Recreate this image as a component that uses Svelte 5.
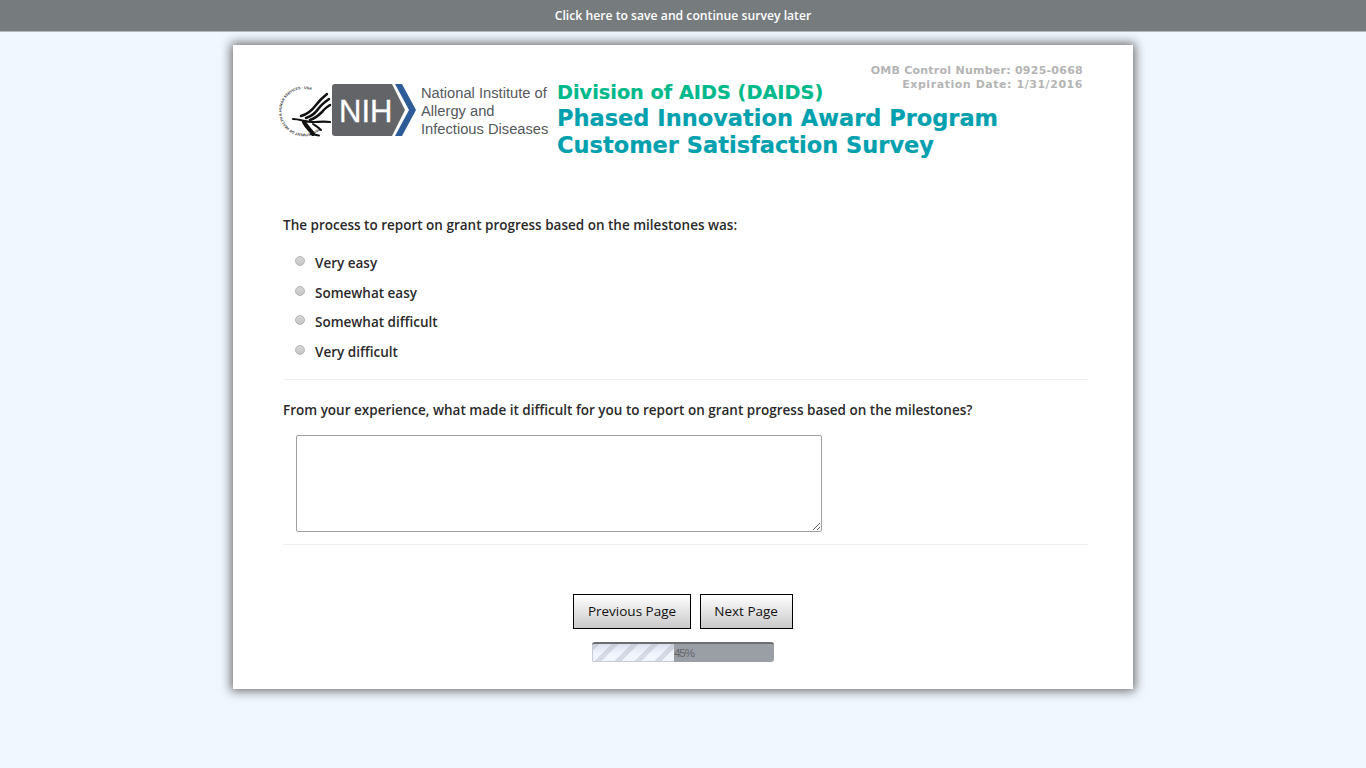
<script>
  const options = ['Very easy', 'Somewhat easy', 'Somewhat difficult', 'Very difficult'];
  const progress = 45;
</script>

<div class="page">
  <div class="save-bar">Click here to save and continue survey later</div>

  <main class="card">
    <header class="masthead">
      <svg class="logo" width="272" height="56" viewBox="0 0 272 56" role="img" aria-label="NIH National Institute of Allergy and Infectious Diseases">
        <defs>
          <path id="ring" d="M41 44 A22.5 22.5 0 1 1 42 11.5" />
        </defs>
        <text class="seal"><textPath href="#ring">DEPARTMENT OF HEALTH &amp; HUMAN SERVICES · USA</textPath></text>
        <g fill="none" stroke="#111" stroke-linecap="round">
          <path d="M23 32 C31 30 35 25 38 21 C41 17 44 14 49 10" stroke-width="2.5" />
          <path d="M28 34 C35 32 38 28 41 24 C44 20 47 18 51 15" stroke-width="2.5" />
          <path d="M32 36 C38 34 41 31 44 28 C46 25 49 23 52 21" stroke-width="2.5" />
          <path d="M15 35 C22 35 27 38 34 38 C40 38 46 37 52 38" stroke-width="2.2" />
          <path d="M26 38 C29 44 33 46 35 50" stroke-width="4" />
          <path d="M35 40 C38 42 40 43 43 46" stroke-width="2" />
          <path d="M33 50 L41 51.5" stroke-width="2" />
        </g>
        <path d="M57 0 H114 L127 26 L114 52 H57 Q54 52 54 49 V3 Q54 0 57 0 Z" fill="#636468" />
        <path d="M117 0 H124 L138 26 L124 52 H117 L131 26 Z" fill="#2e5c99" />
        <text x="61" y="38" class="nih">NIH</text>
        <text x="143" y="14" class="inst">National Institute of</text>
        <text x="143" y="32" class="inst">Allergy and</text>
        <text x="143" y="50" class="inst">Infectious Diseases</text>
      </svg>
      <div class="titles">
        <div class="division">Division of AIDS (DAIDS)</div>
        <div class="title">Phased Innovation Award Program</div>
        <div class="title">Customer Satisfaction Survey</div>
      </div>
      <div class="omb">
        <div class="control">OMB Control Number: 0925-0668</div>
        <div class="expiry">Expiration Date: 1/31/2016</div>
      </div>
    </header>

    <section class="question first">
      <p class="label">The process to report on grant progress based on the milestones was:</p>
      <div class="options">
        {#each options as option}
          <label class="option">
            <input type="radio" name="process" />
            <span>{option}</span>
          </label>
        {/each}
      </div>
    </section>

    <section class="question second">
      <p class="label">From your experience, what made it difficult for you to report on grant progress based on the milestones?</p>
      <textarea></textarea>
    </section>

    <div class="actions">
      <button type="button">Previous Page</button>
      <button type="button">Next Page</button>
    </div>

    <div class="progress">
      <div class="fill" style="width: {progress}%"></div>
      <span>{progress}%</span>
    </div>
  </main>
</div>

<style>
  :global(body) {
    background: #f0f7ff;
    font-family: "Open Sans", sans-serif;
  }

  .page {
    min-height: 768px;
    overflow: hidden;
  }

  .save-bar {
    height: 31px;
    line-height: 31px;
    background: #767b7e;
    border-bottom: 1px solid #b4b8bb;
    color: #fff;
    text-align: center;
    font-size: 12.2px;
    font-weight: 600;
  }

  .card {
    width: 805px;
    height: 644px;
    margin: 13px 0 0 233px;
    padding: 0 45px 0 50px;
    background: #fff;
    box-shadow: 0 0 10px 2px #6a6a6a;
  }

  .masthead {
    height: 171px;
    position: relative;
    display: flex;
  }

  .logo {
    margin: 39px 0 0 -5px;
    flex: none;
  }

  .seal {
    font-family: "Liberation Sans", sans-serif;
    font-size: 3.6px;
    font-weight: 700;
    fill: #333;
  }

  .nih {
    font-family: "Liberation Sans", sans-serif;
    font-size: 31px;
    fill: #fff;
    stroke: #fff;
    stroke-width: 0.3;
  }

  .inst {
    font-family: "Liberation Sans", sans-serif;
    font-size: 14.7px;
    fill: #55585c;
  }

  .titles {
    margin: 35px 0 0 7px;
    font-family: "DejaVu Sans", sans-serif;
    font-weight: 700;
    white-space: nowrap;
    -webkit-text-stroke: 0.2px;
  }

  .division {
    color: #00b98a;
    font-size: 19.3px;
    line-height: 25px;
  }

  .title {
    color: #00a0ae;
    font-size: 22.5px;
    line-height: 27px;
  }

  .omb {
    position: absolute;
    top: 19px;
    right: 5px;
    text-align: right;
    font-family: "DejaVu Sans", sans-serif;
    font-size: 11px;
    font-weight: 700;
    line-height: 14px;
    color: #b4b4b4;
  }

  .control {
    letter-spacing: 0.25px;
  }

  .expiry {
    letter-spacing: 0.55px;
  }

  .question {
    box-sizing: border-box;
    border-bottom: 1px solid #eee;
  }

  .first {
    height: 164px;
  }

  .second {
    height: 165px;
    padding-top: 21px;
  }

  .label {
    margin: 0;
    color: #2a2a2a;
    font-size: 13.5px;
    font-weight: 600;
    line-height: 18px;
  }

  .options {
    margin-top: 14px;
    padding-left: 12px;
    display: flex;
    flex-direction: column;
  }

  .option {
    display: flex;
    align-items: center;
    height: 29.7px;
    color: #2a2a2a;
    font-size: 13.5px;
    font-weight: 600;
  }

  .option input {
    appearance: none;
    width: 10px;
    height: 10px;
    margin: 0 10px 4px 0;
    border: 1px solid #b5b5b5;
    border-radius: 50%;
    background: linear-gradient(#d8d8d8, #c4c4c4);
  }

  textarea {
    display: block;
    box-sizing: border-box;
    width: 526px;
    height: 97px;
    margin: 16px 0 0 13px;
    border: 1px solid #a0a0a0;
    border-radius: 2px;
    background: #fff;
  }

  .actions {
    display: flex;
    justify-content: center;
    gap: 9px;
    margin: 49px -45px 0 -50px;
  }

  button {
    height: 35px;
    min-width: 93px;
    padding: 0 13.5px 2px;
    border: 1px solid #000;
    background: linear-gradient(#fff, #c9c9c9);
    color: #111;
    font-family: "Open Sans", sans-serif;
    font-size: 13.5px;
  }

  .progress {
    box-sizing: border-box;
    width: 182px;
    height: 20px;
    margin: 13px 0 0 309px;
    background: #9a9ea5;
    border-radius: 3px;
    border-top: 2px solid #6b6e72;
    overflow: hidden;
    display: flex;
    font-family: "Liberation Sans", sans-serif;
    font-size: 11.5px;
    letter-spacing: -1px;
    line-height: 19px;
    color: #62666b;
  }

  .fill {
    box-sizing: border-box;
    border: 1px solid #c5cbd6;
    border-top: 0;
    border-right: 0;
    background:
      linear-gradient(rgba(170, 176, 190, 0.3), rgba(255, 255, 255, 0) 60%),
      repeating-linear-gradient(-45deg, #f0f5fe 0 9px, #d5dae5 9px 14px);
  }
</style>
